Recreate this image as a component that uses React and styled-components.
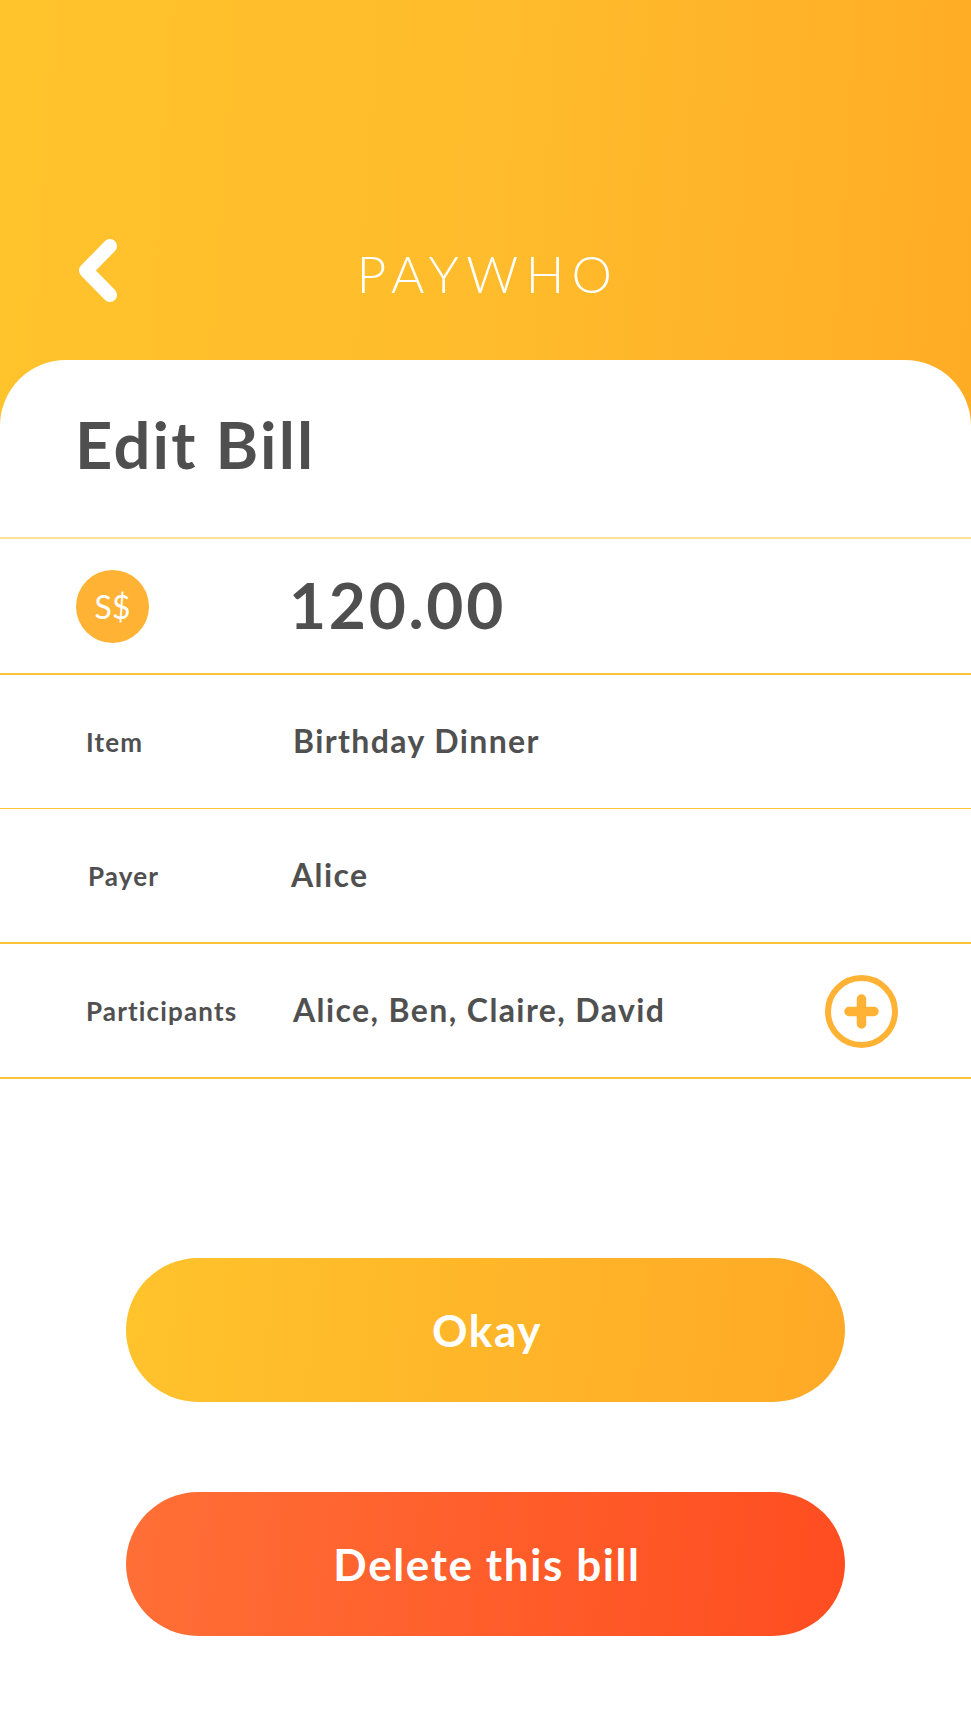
import React from 'react';
import styled, { createGlobalStyle } from 'styled-components';

const GlobalStyle = createGlobalStyle`
  html, body {
    margin: 0;
    padding: 0;
    background: #fff;
    font-family: 'Lato', 'Open Sans', sans-serif;
  }
  * { box-sizing: border-box; }
`;

const Page = styled.div`
  width: 971px;
  height: 1726px;
  overflow: hidden;
  display: flex;
  flex-direction: column;
  background: #fff;
`;

const Header = styled.header`
  height: 426px;
  flex-shrink: 0;
  padding: 234px 0 0 76px;
  background: linear-gradient(94deg, #ffc32c 0%, #ffbc2c 50%, #ffac25 100%);
  display: flex;
  align-items: flex-start;
`;

const BackIcon = styled.svg`
  width: 44px;
  height: 70px;
  flex-shrink: 0;
`;

const Brand = styled.h1`
  flex: 1;
  margin: 10px 0 0 0;
  padding-right: 115px;
  text-align: center;
  color: #fff;
  font-weight: 300;
  font-size: 51px;
  line-height: 60px;
  letter-spacing: 7.4px;
`;

const Card = styled.main`
  margin-top: -66px;
  background: #fff;
  border-radius: 66px 66px 0 0;
  flex: 1;
  display: flex;
  flex-direction: column;
`;

const Title = styled.h2`
  margin: 0;
  height: 177px;
  padding: 46px 0 0 75px;
  color: #4f4f4f;
  font-weight: 700;
  font-size: 65px;
  line-height: 76px;
  letter-spacing: 2.2px;
`;

const Row = styled.div`
  height: ${p => p.$height}px;
  flex-shrink: 0;
  border-top: ${p => p.$thin ? 1 : 2}px solid ${p => p.$faint ? '#ffe199' : '#ffc439'};
  display: flex;
  align-items: center;
  padding-right: 73px;
`;

const LastLine = styled.div`
  border-top: 2px solid #ffc439;
`;

const LabelCell = styled.div`
  width: 293px;
  flex-shrink: 0;
  padding-left: ${p => p.$indent}px;
  color: #505050;
  font-weight: 700;
  font-size: 26px;
  letter-spacing: 1.15px;
`;

const Currency = styled.div`
  width: 73px;
  height: 73px;
  margin: 1px 140px 0 76px;
  border-radius: 50%;
  background: #ffb233;
  color: #fff;
  font-weight: 400;
  font-size: 32px;
  display: flex;
  align-items: center;
  justify-content: center;
  flex-shrink: 0;
`;

const Amount = styled.div`
  margin-top: -3px;
  color: #4f4f4f;
  font-weight: 700;
  font-size: 64px;
  letter-spacing: 2.7px;
`;

const Value = styled.div`
  flex: 1;
  margin-left: ${p => p.$shift || 0}px;
  margin-top: -2px;
  color: #505050;
  font-weight: 700;
  font-size: 32px;
  letter-spacing: 1.4px;
`;

const PlusIcon = styled.svg`
  width: 73px;
  height: 73px;
  margin-top: 2px;
  flex-shrink: 0;
`;

const Actions = styled.div`
  margin-top: 179px;
  display: flex;
  flex-direction: column;
  align-items: center;
  gap: 90px;
`;

const ActionButton = styled.button`
  width: 719px;
  height: 144px;
  border: 0;
  padding: 0 0 0 3px;
  border-radius: 72px;
  background: ${p => p.$danger
    ? 'linear-gradient(96deg, #ff6f36 0%, #ff4d20 100%)'
    : 'linear-gradient(96deg, #ffc32c 0%, #ffa926 100%)'};
  color: #fff;
  font-family: inherit;
  font-weight: 700;
  font-size: 44px;
  letter-spacing: 1.6px;
`;

export default function App() {
  return (
    <Page>
      <GlobalStyle />
      <Header>
        <BackIcon viewBox="0 0 44 70" fill="none">
          <path d="M34 12 L10 36.5 L34 61" stroke="#fff" strokeWidth="14" strokeLinecap="round" strokeLinejoin="round" />
        </BackIcon>
        <Brand>PAYWHO</Brand>
      </Header>
      <Card>
        <Title>Edit Bill</Title>
        <Row $faint $height={136}>
          <Currency>S$</Currency>
          <Amount>120.00</Amount>
        </Row>
        <Row $height={135}>
          <LabelCell $indent={86}>Item</LabelCell>
          <Value>Birthday Dinner</Value>
        </Row>
        <Row $thin $height={134}>
          <LabelCell $indent={88}>Payer</LabelCell>
          <Value $shift={-2}>Alice</Value>
        </Row>
        <Row $height={135}>
          <LabelCell $indent={86}>Participants</LabelCell>
          <Value>Alice, Ben, Claire, David</Value>
          <PlusIcon viewBox="0 0 73 73" fill="none">
            <circle cx="36.5" cy="36.5" r="33.5" stroke="#ffb233" strokeWidth="6" />
            <path d="M36.5 24 V49 M24 36.5 H49" stroke="#ffb233" strokeWidth="9.5" strokeLinecap="round" />
          </PlusIcon>
        </Row>
        <LastLine />
        <Actions>
          <ActionButton>Okay</ActionButton>
          <ActionButton $danger>Delete this bill</ActionButton>
        </Actions>
      </Card>
    </Page>
  );
}
